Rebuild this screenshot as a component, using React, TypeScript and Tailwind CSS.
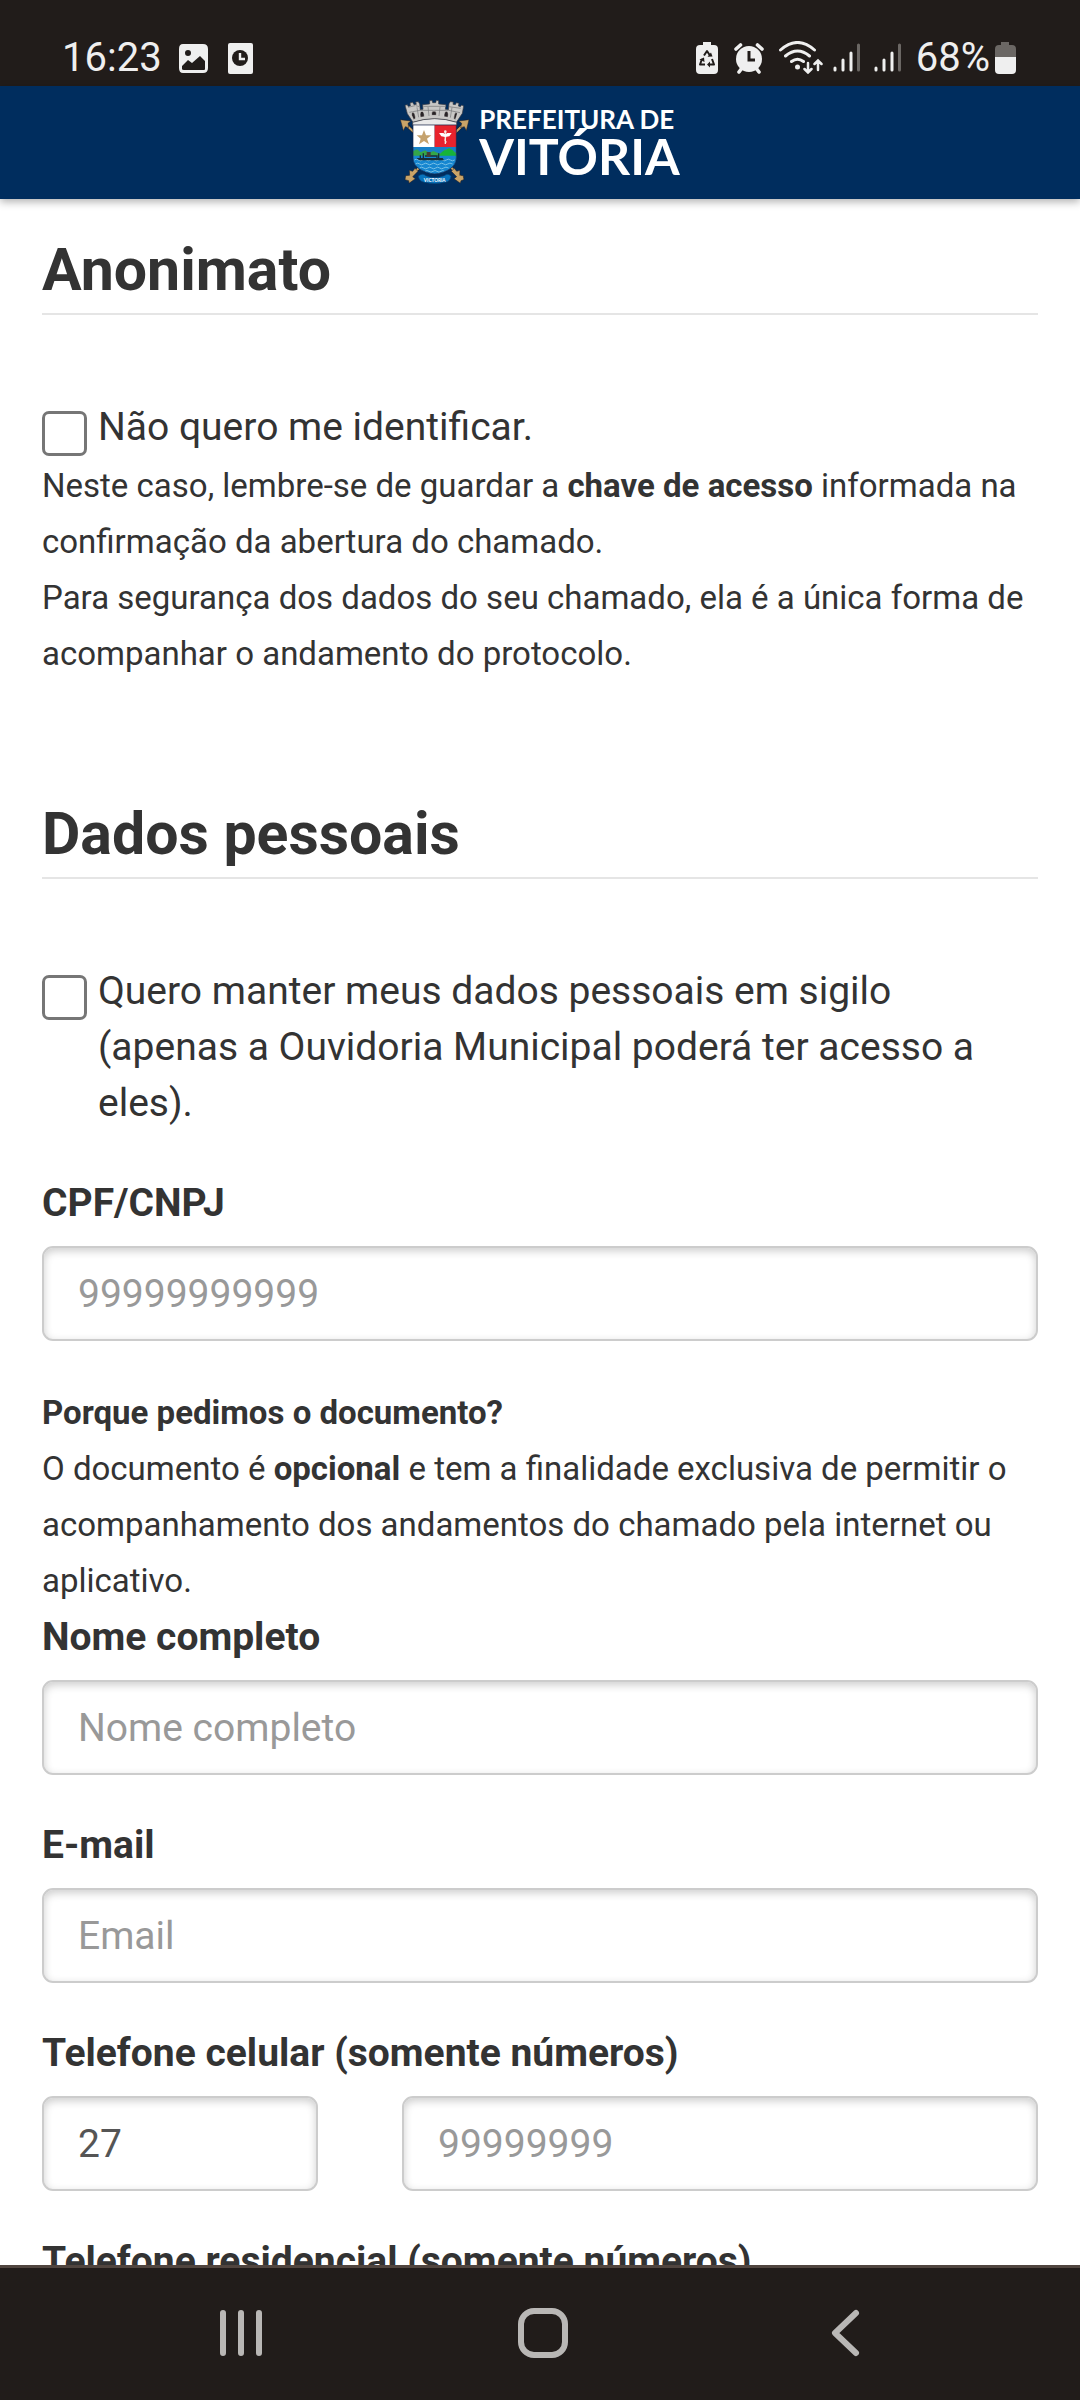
import type { InputHTMLAttributes, ReactNode } from "react";

function StatusBar() {
  return (
    <div className="flex h-[86px] shrink-0 items-end justify-between bg-[#211c1a] pr-16 pb-3 pl-[62px] text-[#efefef]">
      <div className="flex items-center gap-4">
        <span className="text-[40px] leading-[33px]">16:23</span>
        {/* Picture notification */}
        <svg width="33" height="33" viewBox="0 0 33 33" fill="currentColor" aria-hidden="true">
          <path
            fillRule="evenodd"
            d="M5 3H25Q30 3 30 8V27Q30 32 25 32H5Q1 32 1 27V8Q1 3 5 3ZM4 25V28Q4 29 6 29H26Q27 29 27 28V20L22 15L14 22L10 19ZM10 9A3 3 0 1 0 10 15A3 3 0 1 0 10 9Z"
          />
        </svg>
        {/* Clock notification */}
        <svg width="26" height="33" viewBox="0 0 26 33" fill="none" aria-hidden="true">
          <rect x="1" y="2" width="25" height="31" rx="2" fill="currentColor" />
          <circle cx="13" cy="17" r="8" fill="#211c1a" />
          <path d="M13 12V18H18" stroke="currentColor" strokeWidth="2.4" />
        </svg>
      </div>
      <div className="flex items-center gap-2">
        {/* Battery protection */}
        <svg width="29" height="33" viewBox="0 0 29 33" fill="none" aria-hidden="true">
          <path d="M9 1H17V4H20Q24 4 24 8V29Q24 33 20 33H6Q2 33 2 29V8Q2 4 6 4H9Z" fill="currentColor" />
          <path d="M10 14.5L13 10L16 14.5M18 18L20 23.5H15M11 23.5H6L8 18" stroke="#211c1a" strokeWidth="2" strokeLinejoin="round" />
          <path d="M13.5 15.8L18.5 15.5L17 11.5ZM16 20.5V26.5L13 23.5ZM5.5 18.5L10 16.5L10.5 21Z" fill="#211c1a" />
        </svg>
        {/* Alarm */}
        <svg width="37" height="33" viewBox="0 0 37 33" fill="none" aria-hidden="true">
          <circle cx="18" cy="18" r="13" fill="currentColor" />
          <path d="M5 8L9.5 4M31 8L26.500 4M8 31L11 27M28 31L25 27" stroke="currentColor" strokeWidth="3.600" strokeLinecap="round" />
          <path d="M18 10V19H24" stroke="#211c1a" strokeWidth="3" />
        </svg>
        {/* Wi-Fi with traffic arrows */}
        <svg width="48" height="33" viewBox="0 0 48 33" fill="none" stroke="currentColor" strokeWidth="3" strokeLinecap="round" aria-hidden="true">
          <path d="M4.500 9Q21.500 -6 38.500 9M9.500 15Q21.500 5 33.500 15M15.500 20.500Q21.500 16 27.500 20.500" />
          <circle cx="21.500" cy="26" r="2.500" fill="currentColor" stroke="none" />
          <path d="M32 22V31M28.500 28L32 31.500L35.500 28M42 29V20M38.500 23L42 19.500L45.500 23" strokeWidth="2.500" />
        </svg>
        <Signal />
        <Signal />
        <div className="ml-0.5 flex items-center gap-1">
          <span className="text-[40px] leading-[33px]">68%</span>
          <svg width="22" height="33" viewBox="0 0 22 33" aria-hidden="true">
            <path d="M7 1H15V4H18Q22 4 22 8V16H1V8Q1 4 5 4H7Z" fill="#6b6764" />
            <path d="M1 16H22V29Q22 33 18 33H5Q1 33 1 29Z" fill="currentColor" />
          </svg>
        </div>
      </div>
    </div>
  );
}

function Signal() {
  return (
    <svg width="33" height="33" viewBox="0 0 33 33" fill="none" stroke="currentColor" strokeWidth="3" strokeLinecap="round" aria-hidden="true">
      <path d="M3 27V29M11 19V29M19 12V29" />
      <path d="M26.500 4V29" stroke="#6b6764" />
    </svg>
  );
}

function Crest() {
  return (
    <svg width="70" height="85" viewBox="0 0 210 255" fill="none" aria-hidden="true">
      {/* Crossed arrows behind the shield */}
      <g stroke="#1c1c24" strokeWidth="9">
        <path d="M12 68L190 238M196 68L22 238" />
      </g>
      <g stroke="#c9a468" strokeWidth="6">
        <path d="M12 68L190 238M196 68L22 238" />
      </g>
      <g fill="#c9a468" stroke="#1c1c24" strokeWidth="1.500">
        <path d="M1 59L33 63L24 70L26 83L16 80L10 92Z" />
        <path d="M207 59L176 63L185 70L182 83L193 80L199 92Z" />
        <path d="M45 205L54 214L38 230L46 236L27 250L26 242L15 239L17 227L29 226L28 211L38 214Z" />
        <path d="M163 205L154 214L170 230L162 236L181 250L183 242L191 239L190 227L179 226L180 211L170 214Z" />
      </g>
      {/* Mural crown */}
      <path
        d="M15 16L22 14L25 20L31 18L30 9L38 7L42 14L49 13L47 6L55 5L59 12L61 30L69 28L68 14L89 12V2L96 1L98 8H107L109 1L116 2V12L138 14L136 28L145 30L147 11L151 5L160 6L159 13L166 14L169 8L177 10L175 18L181 20L185 15L191 18L187 40L169 67Q104 47 39 67L22 41Z"
        fill="#c8c7c5"
        stroke="#3b3b42"
        strokeWidth="2"
      />
      <path d="M24 22L45 17M47 17L59 20M70 19L136 19M147 20L182 25M28 37L60 31L146 31L180 38" stroke="#8f8f90" strokeWidth="3" />
      <path
        d="M35 46Q34 35 40 37Q45 39 47 55L41 59ZM61 52Q58 34 66 34Q73 35 73 50ZM95 46V37Q102 29 109 37V46ZM132 50Q132 35 139 34Q147 34 144 52ZM161 56Q162 39 168 37Q174 36 170 48L166 59Z"
        fill="#292326"
        stroke="#e7e6e3"
        strokeWidth="1.500"
      />
      <path d="M84 21L87 48M120 21L117 48M51 22L56 52M156 22L151 53" stroke="#77777a" strokeWidth="2" />
      <path d="M38 67Q104 45 170 67L170 76H38Z" fill="#e9e9e9" stroke="#34343b" strokeWidth="2" />
      {/* Shield quarters */}
      <path d="M39 75H104V141H39Z" fill="#fff" />
      <path d="M104 75H169V141H104Z" fill="#e8232d" />
      <path d="M39 141H169V174C169 203 136 219 104 222C72 219 39 203 39 174Z" fill="#1880c7" />
      <path d="M39 164V154L51 148L62 157L75 151L88 158L100 153L119 161L134 150L149 145L169 159V173H39Z" fill="#34a64a" />
      <path d="M119 165L130 153L139 151L147 145L158 151L169 167V173H119Z" fill="#16b43a" />
      <path d="M39 167H169V173C169 203 136 219 104 222C72 219 39 203 39 173Z" fill="#1686d0" />
      <path
        d="M43 180Q49 175 55 180T67 180T79 180T91 180T103 180T115 180T127 180T139 180T151 180T164 180M47 192Q53 187 59 192T71 192T83 192T95 192T107 192T119 192T131 192T143 192T158 192M59 204Q65 199 71 204T83 204T95 204T107 204T119 204T131 204T146 204M75 214Q81 209 87 214T99 214T111 214T123 214T133 214"
        stroke="#8acbea"
        strokeWidth="2.500"
      />
      <path d="M49 174H128L132 181H58Z" fill="#182d37" />
      <path d="M61 166V174M70 160V174M116 160V174M75 168H111V174" stroke="#182d37" strokeWidth="4" />
      <path d="M80 156H92V171H80Z" fill="#453c36" />
      <path d="M72 90L78 106H94L81 116L87 133L72 123L57 133L62 116L50 106H66Z" fill="#c5a26d" />
      {/* Winged staff */}
      <path d="M136 97V132" stroke="#f4e8df" strokeWidth="4" />
      <path d="M131 106Q142 110 136 116T141 127" stroke="#f4e8df" strokeWidth="2.500" />
      <path d="M136 111L124 109L117 99H130L136 103L142 99H155L148 109Z" fill="#fff" />
      <circle cx="136" cy="95" r="4" fill="#f4e8df" />
      <path d="M39 75H169V174C169 203 136 219 104 222C72 219 39 203 39 174Z" stroke="#17264b" strokeWidth="2" />
      {/* Motto ribbon */}
      <path d="M55 228Q68 218 77 227Q104 238 133 227Q145 218 153 229Q150 246 135 247Q104 254 73 247Q57 244 55 228Z" fill="#0873bd" stroke="#06457c" strokeWidth="2" />
      <text x="104" y="245" textAnchor="middle" className="fill-white font-['Lato',sans-serif] text-[14px] font-bold">
        VICTORIA
      </text>
    </svg>
  );
}

function Header() {
  return (
    <header className="relative z-10 flex h-[113px] shrink-0 items-center justify-center bg-[#002d5e] shadow-[0_3px_8px_rgba(0,0,0,0.3)]">
      <a href="#" className="flex items-center gap-[9px] font-['Lato',sans-serif] text-white">
        <Crest />
        <span className="flex flex-col pb-[3px] font-bold">
          <span className="text-[26px] leading-[30px]">PREFEITURA DE</span>
          <span className="text-[50px] leading-[45px]">VITÓRIA</span>
        </span>
      </a>
    </header>
  );
}

function SectionTitle({ children }: { children: ReactNode }) {
  return (
    <h2 className="mb-[84px] border-b-2 border-[#e5e5e5] pb-[7px] text-[59px] leading-[72px] font-bold">{children}</h2>
  );
}

function CheckRow({ id, children }: { id: string; children: ReactNode }) {
  return (
    <div className="flex items-start gap-[11px]">
      <input
        id={id}
        type="checkbox"
        className="mt-3 size-[45px] shrink-0 appearance-none rounded-[7px] border-[3px] border-[#767676] bg-white checked:bg-[#0075ff]"
      />
      <label htmlFor={id} className="text-[39px] leading-[56px]">
        {children}
      </label>
    </div>
  );
}

function TextInput({ className = "w-full", ...rest }: InputHTMLAttributes<HTMLInputElement>) {
  return (
    <input
      {...rest}
      className={`${className} mb-[44px] h-[95px] min-w-0 rounded-[11px] border-2 border-[#ccc] bg-white px-[34px] text-[39px] text-[#555] shadow-[inset_0_3px_8px_rgba(0,0,0,0.2)] placeholder:text-[#999]`}
    />
  );
}

function FieldLabel({ htmlFor, children }: { htmlFor: string; children: ReactNode }) {
  return (
    <label htmlFor={htmlFor} className="mb-[17px] block text-[39px] leading-[52px] font-bold">
      {children}
    </label>
  );
}

function PhoneFields({ id, label, areaCode }: { id: string; label: string; areaCode: string }) {
  return (
    <div>
      <FieldLabel htmlFor={id}>{label}</FieldLabel>
      <div className="flex gap-[84px]">
        <TextInput className="w-[276px]" inputMode="numeric" aria-label="DDD" defaultValue={areaCode} />
        <TextInput className="flex-1" id={id} type="tel" placeholder="99999999" />
      </div>
    </div>
  );
}

function NavigationBar() {
  return (
    <nav className="flex h-[135px] shrink-0 items-center border-t-[3px] border-[#50453f] bg-[#211c1a] pr-[84px] pb-0.5 pl-[90px] text-[#b9b7b5]">
      <button type="button" aria-label="Recentes" className="flex flex-1 justify-center">
        <svg width="50" height="50" viewBox="0 0 50 50" stroke="currentColor" strokeWidth="6" strokeLinecap="round">
          <path d="M7 5V45M25 5V45M43 5V45" />
        </svg>
      </button>
      <button type="button" aria-label="Início" className="flex flex-1 justify-center">
        <svg width="50" height="50" viewBox="0 0 50 50" fill="none" stroke="currentColor" strokeWidth="6">
          <rect x="3" y="3" width="44" height="44" rx="13" />
        </svg>
      </button>
      <button type="button" aria-label="Voltar" className="flex flex-1 justify-center">
        <svg width="50" height="50" viewBox="0 0 50 50" fill="none" stroke="currentColor" strokeWidth="6" strokeLinecap="round" strokeLinejoin="round">
          <path d="M36 5L15 25L36 45" />
        </svg>
      </button>
    </nav>
  );
}

export default function App() {
  return (
    <div className="flex h-screen flex-col bg-white font-['Roboto',sans-serif] text-[#333]">
      <StatusBar />
      <Header />
      <main className="min-h-0 flex-1 overflow-y-auto px-[42px] pt-[35px] [scrollbar-width:none]">
        <section className="mb-[116px]">
          <SectionTitle>Anonimato</SectionTitle>
          <CheckRow id="anonimo">Não quero me identificar.</CheckRow>
          <p className="mt-[2px] text-[33px] leading-[56px]">
            Neste caso, lembre-se de guardar a <strong>chave de acesso</strong> informada na confirmação da abertura do
            chamado.
            <br />
            Para segurança dos dados do seu chamado, ela é a única forma de acompanhar o andamento do protocolo.
          </p>
        </section>
        <section>
          <SectionTitle>Dados pessoais</SectionTitle>
          <div className="mb-[46px]">
            <CheckRow id="sigilo">
              Quero manter meus dados pessoais em sigilo (apenas a Ouvidoria Municipal poderá ter acesso a eles).
            </CheckRow>
          </div>
          <FieldLabel htmlFor="cpf">CPF/CNPJ</FieldLabel>
          <TextInput id="cpf" inputMode="numeric" placeholder="99999999999" />
          <p className="mb-0.5 text-[33px] leading-[56px]">
            <strong>Porque pedimos o documento?</strong>
            <br />O documento é <strong>opcional</strong> e tem a finalidade exclusiva de permitir o acompanhamento dos
            andamentos do chamado pela internet ou aplicativo.
          </p>
          <FieldLabel htmlFor="nome">Nome completo</FieldLabel>
          <TextInput id="nome" placeholder="Nome completo" />
          <FieldLabel htmlFor="email">E-mail</FieldLabel>
          <TextInput id="email" type="email" placeholder="Email" />
          <PhoneFields id="celular" label="Telefone celular (somente números)" areaCode="27" />
          <PhoneFields id="residencial" label="Telefone residencial (somente números)" areaCode="27" />
        </section>
      </main>
      <NavigationBar />
    </div>
  );
}
